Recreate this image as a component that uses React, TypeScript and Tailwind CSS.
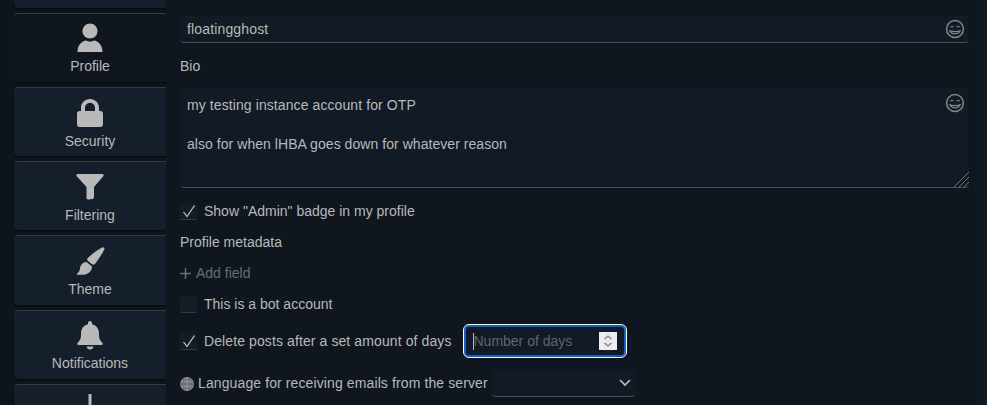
import type { ReactNode } from "react";

const icon = "w-[34px] h-[32px] fill-[#b9b9ba]";

function Tab({ children, label, active }: { children?: ReactNode; label?: string; active?: boolean }) {
  return (
    <div className={`h-[69.25px] shrink-0 rounded-l-[4px] border-t border-t-[#353c45] flex flex-col items-center pt-[7px] shadow-[0_1px_1px_#070b0f] ${active ? "bg-[#0f161e]" : "bg-[#151e2b]"}`}>
      {children}
      {label && <div className="mt-[5.7px] text-[14px] leading-[16px] text-[#b9b9ba]">{label}</div>}
    </div>
  );
}

function Check({ checked }: { checked?: boolean }) {
  return (
    <span className="w-[17px] h-[17px] shrink-0 rounded-[2px] bg-[#151c28] border-b border-b-[#353c45] flex items-center justify-center">
      {checked && (
        <svg width="14" height="14" viewBox="0 0 14 14" fill="none" stroke="#c8c8c9" strokeWidth="1.2">
          <path d="M1.5 8 L5 12.5 L12.5 1.5" />
        </svg>
      )}
    </span>
  );
}

function Smile() {
  return (
    <svg width="20" height="20" viewBox="0 0 20 20" fill="none" stroke="#85888c" strokeWidth="1.5">
      <circle cx="10" cy="10" r="8.4" />
      <path d="M4.8 11.8 C6.5 15.8 13.5 15.8 15.2 11.8 C13 12.9 7 12.9 4.8 11.8 Z" strokeWidth="1.1" />
      <path d="M5.5 8.3 C6 6.8 7.9 6.8 8.4 8.3 M11.6 8.3 C12.1 6.8 14 6.8 14.5 8.3" strokeWidth="1.1" />
    </svg>
  );
}

function Globe() {
  return (
    <svg className="mr-[4px]" width="14" height="14" viewBox="0 0 14 14" fill="none" stroke="#808387" strokeWidth="1.1">
      <circle cx="7" cy="7" r="6.4" fill="#5f6367" />
      <ellipse cx="7" cy="7" rx="3" ry="6.4" />
      <path d="M1 4.8 H13 M1 9.2 H13 M7 0.6 V13.4" stroke="#9a9da1" />
    </svg>
  );
}

export default function App() {
  return (
    <div className="w-[987px] h-[405px] overflow-hidden flex bg-[#0f161e] text-[14px] text-[#b9b9ba] font-['Liberation_Sans',Arial,sans-serif]">
      <div className="w-[166px] shrink-0 self-start h-[520px] bg-[#0d141b] pl-[14px] flex flex-col gap-[5px] mt-[-61.6px]">
        <Tab />
        <Tab active label="Profile">
          <svg className={icon} viewBox="0 0 34 32"><circle cx="17" cy="10" r="7.6" /><path d="M4.5 31 C4.5 24 9 20 13 19.6 C15.5 21 18.5 21 21 19.6 C25 20 29.5 24 29.5 31 Z" /></svg>
        </Tab>
        <Tab label="Security">
          <svg className={icon} viewBox="0 0 34 32"><path transform="translate(0 2)" fillRule="evenodd" d="M8 14 V11 C8 5.5 12 2 17 2 C22 2 26 5.5 26 11 V14 H27.5 C28.9 14 30 15.1 30 16.5 V27.5 C30 28.9 28.9 30 27.5 30 H6.5 C5.1 30 4 28.9 4 27.5 V16.5 C4 15.1 5.1 14 6.5 14 Z M12 14 H22 V11 C22 7.8 19.8 6 17 6 C14.2 6 12 7.8 12 11 Z" /></svg>
        </Tab>
        <Tab label="Filtering">
          <svg className={icon} viewBox="0 0 34 32"><path transform="translate(0 3)" d="M3.5 4 C3 3 3.6 2 4.6 2 H29.4 C30.4 2 31 3 30.5 4 L21 15 V25 C21 26 20.5 26.5 19.8 27 L15.5 27.5 C14.6 27.6 13.5 27 13.5 26 V15 Z" /></svg>
        </Tab>
        <Tab label="Theme">
          <svg className={icon} viewBox="0 0 34 32"><path transform="translate(0 2)" d="M29 2.5 C30.5 1.5 32 3 31.3 4.6 C28.5 10 25.5 14.5 22 19 C21 20 19.5 19.8 18 18.6 L14.8 15.8 C14 15 14 14 14.8 13 C18.5 9.5 23.5 5.5 29 2.5 Z M13.5 17 L19 21.5 C19 26 15 29.5 10.5 29.7 H4.5 C3.6 29.7 3.6 28.9 4.2 28.5 C5.8 27.4 6.8 25.5 7 23.2 C7.5 19.5 10 17.2 13.5 17 Z" /></svg>
        </Tab>
        <Tab label="Notifications">
          <svg className={icon} viewBox="0 0 34 32"><path transform="translate(0 2)" d="M17 1 C18.3 1 19 2 19 3 V4.2 C23.6 5.2 26 9 26 13.5 V16 C26 19 27.8 21 29.5 23 C30.2 24 29.6 25 28.5 25 H5.5 C4.4 25 3.8 24 4.5 23 C6.2 21 8 19 8 16 V13.5 C8 9 10.4 5.2 15 4.2 V3 C15 2 15.7 1 17 1 Z M13.5 26.5 H20.5 C20.2 28.2 18.8 29.5 17 29.5 C15.2 29.5 13.8 28.2 13.5 26.5 Z" /></svg>
        </Tab>
        <Tab>
          <svg className={icon} viewBox="0 0 34 32"><path d="M15.5 2 H18.5 V30 H15.5 Z" /></svg>
        </Tab>
      </div>
      <div className="flex-1 pl-[14px] pr-[14px] pt-[15px] flex flex-col items-start">
        <div className="relative w-full h-[28px] rounded-[4px] bg-[#111a25] border-b border-b-[#4b5058] shadow-[0_0_1px_#070b0f] flex items-center justify-between pl-[7px] pr-[4px]">
          <span className="leading-[28px] tracking-[0.15px]">floatingghost</span>
          <Smile />
        </div>
        <div className="mt-[15px] leading-[16px]">Bio</div>
        <div className="relative mt-[14px] w-full h-[100px] rounded-[4px] bg-[#111a25] border-b border-b-[#4b5058] shadow-[0_0_1px_#070b0f] px-[7px] pt-[8px] leading-[19.5px]">
          <div className="tracking-[0.09px]">my testing instance account for OTP</div>
          <div className="mt-[19.5px] tracking-[0.05px]">also for when lHBA goes down for whatever reason</div>
          <span className="absolute top-[5px] right-[4px] flex"><Smile /></span>
          <svg className="absolute right-0 bottom-0" width="15" height="15" viewBox="0 0 15 15" stroke="#6d7076" strokeWidth="1">
            <path d="M0 15 L15 0 M5 15 L15 5 M10 15 L15 10" />
          </svg>
        </div>
        <label className="mt-[15px] flex items-center gap-[7px] h-[17px]"><Check checked /><span>Show "Admin" badge in my profile</span></label>
        <div className="mt-[14px] leading-[16px]">Profile metadata</div>
        <div className="mt-[15px] h-[16px] flex items-center gap-[5px] text-[#6b6e73]">
          <svg width="11" height="11" viewBox="0 0 11 11" stroke="#6b6e73" strokeWidth="1.5"><path d="M5.5 0 V11 M0 5.5 H11" /></svg>
          <span>Add field</span>
        </div>
        <label className="mt-[15px] flex items-center gap-[7px] h-[17px]"><Check /><span>This is a bot account</span></label>
        <div className="mt-[12px] flex items-center h-[32px]">
          <label className="flex items-center gap-[7px]"><Check checked /><span className="tracking-[0.1px]">Delete posts after a set amount of days</span></label>
          <div className="ml-[13px] w-[162px] h-[32px] rounded-[5px] border-2 border-[#0f62d6] outline outline-1 outline-white flex items-center bg-[#111a25] pl-[7px] pr-[7px]">
            <span className="w-px h-[17px] bg-[#b9b9ba] mr-[-1px]" />
            <span className="text-[#62666c] flex-1">Number of days</span>
            <span className="w-[18px] h-[18px] bg-[#ececf0] flex flex-col items-center justify-center">
              <svg width="10" height="14" viewBox="0 0 10 14" fill="none" stroke="#7a7a80" strokeWidth="1.3"><path d="M1.5 5 L5 2 L8.5 5 M1.5 9 L5 12 L8.5 9" /></svg>
            </span>
          </div>
        </div>
        <div className="mt-[13px] flex items-center h-[27px]">
          <Globe />
          <span className="tracking-[0.11px]">Language for receiving emails from the server</span>
          <div className="relative ml-[4px] w-[143px] h-[27px] rounded-[4px] bg-[#111a25] border-b border-b-[#4b5058]">
            <svg className="absolute right-[4px] top-[9px]" width="12" height="8" viewBox="0 0 12 8" fill="none" stroke="#b9b9ba" strokeWidth="1.7"><path d="M1 1 L6 6 L11 1" /></svg>
          </div>
        </div>
      </div>
      <div className="w-[4px] shrink-0 bg-[#111b26]" />
    </div>
  );
}
